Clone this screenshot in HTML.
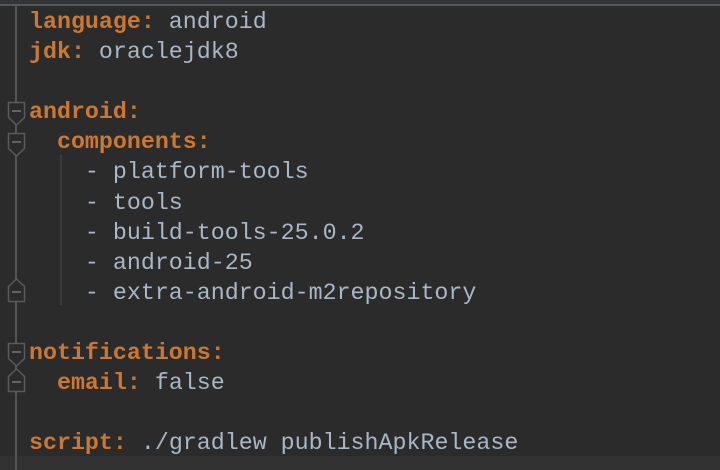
<!DOCTYPE html>
<html><head><style>
body{margin:0;width:720px;height:470px;overflow:hidden;background:#2b2b2b;position:relative;font-family:"Liberation Mono","DejaVu Sans Mono",monospace;}
.top{position:absolute;left:0;top:0;width:720px;height:4px;background:#333538;}
.topl{position:absolute;left:0;top:4px;width:720px;height:2px;background:#555658;}
.bot{position:absolute;left:0;top:456px;width:720px;height:14px;background:#323232;}
.code{position:absolute;left:29px;top:7px;font-size:23.3px;line-height:30.1px;color:#a9b7c6;white-space:pre;}
.k{color:#cc7832;font-weight:bold;}
.guide{position:absolute;left:60px;top:155px;width:2px;height:150px;background:#3a3a3a;}
svg{position:absolute;left:0;top:0;}
</style></head><body>
<div class="top"></div><div class="topl"></div><div class="bot"></div>
<div class="guide"></div>
<svg width="30" height="470">
<line x1="16" y1="6" x2="16" y2="470" stroke="#555" stroke-width="2"/>
<g fill="#2b2b2b" stroke="#5a5a5a" stroke-width="1.5">
<path d="M8.5 102.5h16v15l-8 7.5l-8-7.5z"/>
<path d="M8.5 133.5h16v15l-8 7.5l-8-7.5z"/>
<path d="M8.5 343.5h16v15l-8 7.5l-8-7.5z"/>
<path d="M8.5 301.5h16v-15l-8-7.5l-8 7.5z"/>
<path d="M8.5 391.5h16v-15l-8-7.5l-8 7.5z"/>
</g>
<g stroke="#777" stroke-width="1.5">
<line x1="12" y1="111" x2="21" y2="111"/>
<line x1="12" y1="142" x2="21" y2="142"/>
<line x1="12" y1="352" x2="21" y2="352"/>
<line x1="12" y1="292" x2="21" y2="292"/>
<line x1="12" y1="382" x2="21" y2="382"/>
</g>
</svg>
<div class="code"><span class="k">language:</span> android
<span class="k">jdk:</span> oraclejdk8

<span class="k">android:</span>
  <span class="k">components:</span>
    - platform-tools
    - tools
    - build-tools-25.0.2
    - android-25
    - extra-android-m2repository

<span class="k">notifications:</span>
  <span class="k">email:</span> false

<span class="k">script:</span> ./gradlew publishApkRelease</div>
</body></html>
